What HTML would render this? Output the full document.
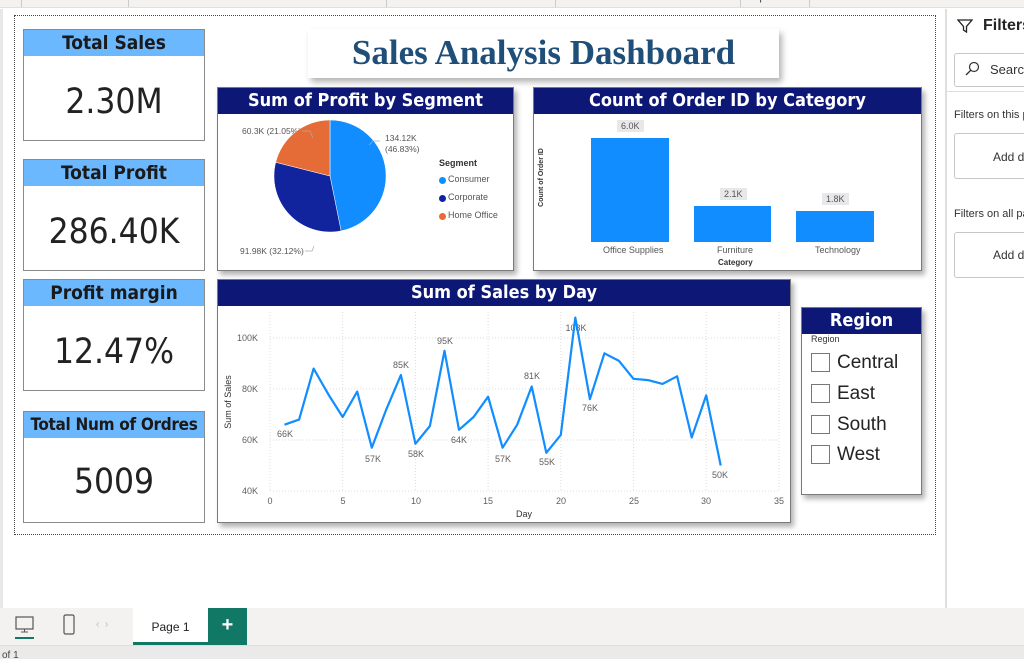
<!DOCTYPE html>
<html><head><meta charset="utf-8"><style>
*{margin:0;padding:0;box-sizing:border-box}
body{width:1024px;height:659px;position:relative;overflow:hidden;background:#fff;font-family:"Liberation Sans",sans-serif;color:#252423}
.a{position:absolute}
.card{position:absolute;background:#fff;border:1px solid #8a8a8a}
.kh{position:absolute;left:0;right:0;top:0;background:#6cb8ff;text-align:center;font-weight:bold;font-size:19px;line-height:26px;color:#1a1a1a;font-family:"DejaVu Sans Condensed","Liberation Sans",sans-serif;white-space:nowrap;overflow:hidden}
.kv{position:absolute;left:0;right:0;text-align:center;font-size:35px;color:#222;font-family:"DejaVu Sans Condensed","Liberation Sans",sans-serif}
.vis{position:absolute;background:#fff;border:1px solid #7a7a7a;box-shadow:3px 4px 5px rgba(0,0,0,.3)}
.vh{position:absolute;left:0;right:0;top:0;height:26px;background:#0d1775;color:#fff;text-align:center;font-weight:bold;font-size:18px;line-height:26px;font-family:"DejaVu Sans Condensed","Liberation Sans",sans-serif}
.sm{font-size:9px;color:#555;white-space:nowrap}
.cb{position:absolute;left:9px;width:19px;height:19px;border:1.5px solid #777}
.cl{position:absolute;left:35px;font-size:19px;color:#252423}
</style></head><body>
<div class="a" style="left:0;top:0;width:1024px;height:8px;background:#f3f2f1;border-bottom:1px solid #e1dfdd;overflow:hidden;font-size:11px;color:#444">
<span class="a" style="left:60px;top:-9px">Visuals</span><span class="a" style="left:236px;top:-9px">AI visuals</span><span class="a" style="left:437px;top:-9px">Power Platform</span><span class="a" style="left:628px;top:-9px">Elements</span><span class="a" style="left:752px;top:-9px">Sparklines</span>
<div class="a" style="left:21px;top:0;width:1px;height:8px;background:#ccc"></div><div class="a" style="left:128px;top:0;width:1px;height:8px;background:#ccc"></div><div class="a" style="left:386px;top:0;width:1px;height:8px;background:#ccc"></div><div class="a" style="left:555px;top:0;width:1px;height:8px;background:#ccc"></div><div class="a" style="left:740px;top:0;width:1px;height:8px;background:#ccc"></div><div class="a" style="left:809px;top:0;width:1px;height:8px;background:#ccc"></div>
</div>
<div class="a" style="left:0;top:9px;width:3px;height:600px;background:#e8e8e8"></div>
<div class="a" style="left:14px;top:15px;width:922px;height:520px;border:1px dotted #444"></div>
<div class="card" style="left:23px;top:29px;width:182px;height:112px"><div class="kh">Total Sales</div><div class="kv" style="top:52px">2.30M</div></div>
<div class="card" style="left:23px;top:159px;width:182px;height:112px"><div class="kh">Total Profit</div><div class="kv" style="top:52px">286.40K</div></div>
<div class="card" style="left:23px;top:279px;width:182px;height:112px"><div class="kh">Profit margin</div><div class="kv" style="top:52px">12.47%</div></div>
<div class="card" style="left:23px;top:411px;width:182px;height:112px"><div class="kh" style="font-size:17px;letter-spacing:-0.3px">Total Num of Ordres</div><div class="kv" style="top:50px">5009</div></div>
<div class="a" style="left:308px;top:29px;width:471px;height:49px;background:#fff;box-shadow:3px 4px 6px rgba(0,0,0,.3);text-align:center;font-family:'Liberation Serif',serif;font-weight:bold;font-size:35px;line-height:48px;color:#1f4e79">Sales Analysis Dashboard</div>
<div class="vis" style="left:217px;top:87px;width:297px;height:184px"><div class="vh">Sum of Profit by Segment</div>
<span class="a sm" style="left:221px;top:70px;font-weight:bold;color:#333">Segment</span>
<span class="a" style="left:221px;top:89px;width:7px;height:7px;border-radius:50%;background:#118dff"></span><span class="a sm" style="left:230px;top:86px">Consumer</span>
<span class="a" style="left:221px;top:107px;width:7px;height:7px;border-radius:50%;background:#12239e"></span><span class="a sm" style="left:230px;top:104px">Corporate</span>
<span class="a" style="left:221px;top:125px;width:7px;height:7px;border-radius:50%;background:#e66c37"></span><span class="a sm" style="left:230px;top:122px">Home Office</span>
<span class="a sm" style="left:24px;top:38px;font-size:8.5px">60.3K (21.05%)</span>
<span class="a sm" style="left:167px;top:45px;line-height:11px;font-size:8.5px">134.12K<br>(46.83%)</span>
<span class="a sm" style="left:22px;top:158px;font-size:8.5px">91.98K (32.12%)</span>
</div>
<div class="vis" style="left:533px;top:87px;width:389px;height:184px"><div class="vh">Count of Order ID by Category</div>
<span class="a" style="left:-22px;top:86px;transform:rotate(-90deg);font-size:7px;color:#333;font-weight:bold;white-space:nowrap">Count of Order ID</span>
<div class="a" style="left:57px;top:50px;width:78px;height:104px;background:#118dff"></div>
<div class="a" style="left:160px;top:118px;width:77px;height:36px;background:#118dff"></div>
<div class="a" style="left:262px;top:123px;width:78px;height:31px;background:#118dff"></div>
<span class="a sm" style="left:83px;top:32px;background:#e8e8ea;padding:1px 4px">6.0K</span>
<span class="a sm" style="left:186px;top:100px;background:#e8e8ea;padding:1px 4px">2.1K</span>
<span class="a sm" style="left:288px;top:105px;background:#e8e8ea;padding:1px 4px">1.8K</span>
<span class="a sm" style="left:69px;top:157px">Office Supplies</span>
<span class="a sm" style="left:183px;top:157px">Furniture</span>
<span class="a sm" style="left:281px;top:157px">Technology</span>
<span class="a" style="left:184px;top:170px;font-size:8px;color:#333;font-weight:bold">Category</span>
</div>
<div class="vis" style="left:217px;top:279px;width:574px;height:244px"><div class="vh">Sum of Sales by Day</div></div>
<div class="vis" style="left:801px;top:307px;width:121px;height:188px"><div class="vh">Region</div>
<span class="a" style="left:9px;top:26px;font-size:9px;color:#333">Region</span>
<div class="cb" style="top:45px"></div><span class="cl" style="top:44px">Central</span>
<div class="cb" style="top:76px"></div><span class="cl" style="top:75px">East</span>
<div class="cb" style="top:107px"></div><span class="cl" style="top:106px">South</span>
<div class="cb" style="top:137px"></div><span class="cl" style="top:136px">West</span>
</div>
<svg class="a" style="left:0;top:0" width="1024" height="659" font-family="Liberation Sans, sans-serif">
<path d="M330,176 L330,120 A56,56 0 0 1 341.1,230.9 Z" fill="#118dff" stroke="#fff" stroke-width="0.5"/>
<path d="M330,176 L341.1,230.9 A56,56 0 0 1 275.7,162.3 Z" fill="#12239e" stroke="#fff" stroke-width="0.5"/>
<path d="M330,176 L275.7,162.3 A56,56 0 0 1 330,120 Z" fill="#e66c37" stroke="#fff" stroke-width="0.5"/>
<g stroke="#aaa" fill="none" stroke-width="0.7"><path d="M302,131 H310 L313,138"/><path d="M369,145 L373,141 H380"/><path d="M305,251 H312 L314,246"/></g>
<g stroke="#ddd" stroke-dasharray="1,2" stroke-width="1">
<path d="M270,338 H779 M270,389 H779 M270,440 H779 M270,491 H779"/>
<path d="M270,312 V491 M342.7,312 V491 M415.4,312 V491 M488.1,312 V491 M560.8,312 V491 M633.5,312 V491 M706.2,312 V491 M779,312 V491"/>
</g>
<g font-size="9" fill="#605e5c">
<text x="258" y="341" text-anchor="end">100K</text><text x="258" y="392" text-anchor="end">80K</text><text x="258" y="443" text-anchor="end">60K</text><text x="258" y="494" text-anchor="end">40K</text>
<text x="270" y="504" text-anchor="middle">0</text><text x="343" y="504" text-anchor="middle">5</text><text x="416" y="504" text-anchor="middle">10</text><text x="488" y="504" text-anchor="middle">15</text><text x="561" y="504" text-anchor="middle">20</text><text x="634" y="504" text-anchor="middle">25</text><text x="706" y="504" text-anchor="middle">30</text><text x="779" y="504" text-anchor="middle">35</text>
<text x="285" y="437" text-anchor="middle">66K</text><text x="373" y="462" text-anchor="middle">57K</text><text x="401" y="368" text-anchor="middle">85K</text><text x="416" y="457" text-anchor="middle">58K</text><text x="445" y="344" text-anchor="middle">95K</text><text x="459" y="443" text-anchor="middle">64K</text><text x="503" y="462" text-anchor="middle">57K</text><text x="532" y="379" text-anchor="middle">81K</text><text x="547" y="465" text-anchor="middle">55K</text><text x="576" y="331" text-anchor="middle">108K</text><text x="590" y="411" text-anchor="middle">76K</text><text x="720" y="478" text-anchor="middle">50K</text>
</g>
<text x="524" y="517" font-size="9" fill="#333" text-anchor="middle">Day</text>
<text x="231" y="402" font-size="9" fill="#333" text-anchor="middle" transform="rotate(-90 231 402)">Sum of Sales</text>
<polyline fill="none" stroke="#118dff" stroke-width="2.2" stroke-linejoin="round" points="284.5,424.7 299.1,419.6 313.6,368.6 328.2,394.1 342.7,417 357.2,391.6 371.8,447.7 386.3,409.4 400.9,375 415.4,443.8 429.9,426 444.5,350.8 459,429.8 473.6,417 488.1,396.7 502.6,447.7 517.2,424.7 531.7,386.5 546.3,452.8 560.8,434.9 575.3,317.6 589.9,399.2 604.4,353.3 619,360.9 633.5,378.8 648,380.1 662.6,383.9 677.1,376.3 691.7,437.5 706.2,395.4 720.7,465.5"/>
</svg>
<div class="a" style="left:945px;top:9px;width:2px;height:600px;background:#e1dfdd"></div>
<svg class="a" style="left:957px;top:18px" width="16" height="16"><path d="M1,2 H15 L9.5,8.5 V14 L6.5,12 V8.5 Z" fill="none" stroke="#222" stroke-width="1.3"/></svg>
<span class="a" style="left:983px;top:17px;font-size:16px;font-weight:bold;color:#252423">Filters</span>
<div class="a" style="left:954px;top:53px;width:80px;height:34px;border:1px solid #c8c6c4;border-radius:3px"></div>
<svg class="a" style="left:964px;top:61px" width="16" height="16"><circle cx="10" cy="6" r="4.5" fill="none" stroke="#333" stroke-width="1.2"/><path d="M7,9 L2,14" stroke="#333" stroke-width="1.3"/></svg>
<span class="a" style="left:990px;top:62px;font-size:13px;color:#333">Search</span>
<div class="a" style="left:947px;top:91px;width:77px;height:1px;background:#e1dfdd"></div>
<span class="a" style="left:954px;top:109px;font-size:11px;color:#333;white-space:nowrap">Filters on this page</span>
<div class="a" style="left:954px;top:133px;width:80px;height:46px;border:1px solid #c8c6c4;border-radius:3px"></div>
<span class="a" style="left:993px;top:150px;font-size:12px;color:#333;white-space:nowrap">Add data</span>
<span class="a" style="left:954px;top:208px;font-size:11px;color:#333;white-space:nowrap">Filters on all pages</span>
<div class="a" style="left:954px;top:232px;width:80px;height:46px;border:1px solid #c8c6c4;border-radius:3px"></div>
<span class="a" style="left:993px;top:248px;font-size:12px;color:#333;white-space:nowrap">Add data</span>
<div class="a" style="left:0;top:608px;width:1024px;height:37px;background:#f3f2f1"></div>
<svg class="a" style="left:14px;top:615px" width="22" height="26"><rect x="2" y="2" width="17" height="12" fill="none" stroke="#555" stroke-width="1.2"/><path d="M10.5,14 V17 M7,17 H14" stroke="#555"/><rect x="1" y="22" width="19" height="2" fill="#117865"/></svg>
<svg class="a" style="left:62px;top:614px" width="14" height="22"><rect x="2" y="1" width="10" height="19" rx="1.5" fill="none" stroke="#555" stroke-width="1.2"/></svg>
<span class="a" style="left:96px;top:619px;font-size:10px;color:#bbb">‹ &nbsp;›</span>
<div class="a" style="left:133px;top:608px;width:75px;height:37px;background:#fff;border-bottom:3px solid #117865;text-align:center;font-size:12px;line-height:38px;color:#222">Page 1</div>
<div class="a" style="left:208px;top:608px;width:39px;height:37px;background:#117865;color:#fff;text-align:center;font-size:20px;font-weight:bold;line-height:34px">+</div>
<div class="a" style="left:0;top:645px;width:1024px;height:14px;background:#eaeaea;border-top:1px solid #ddd;font-size:10px;color:#444;padding-left:2px;line-height:20px">of 1</div>
</body></html>
